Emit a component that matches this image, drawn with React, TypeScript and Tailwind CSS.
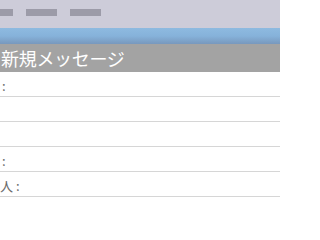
const rows = [':', '', '', ':', '人 :'];

export default function App() {
  return (
    <div
      className="w-[280px] h-[210px] overflow-hidden bg-white"
      style={{ fontFamily: '"Noto Sans CJK JP", "Noto Sans", sans-serif' }}
    >
      {/* toolbar strip */}
      <div className="h-[28px] bg-[#cdccd9] flex gap-[13px] pt-[9px]">
        <div className="w-[13px] h-[7px] bg-[#9c9ba8]" />
        <div className="w-[31px] h-[7px] bg-[#9c9ba8]" />
        <div className="w-[31px] h-[7px] bg-[#9c9ba8]" />
      </div>
      <div className="h-[16px] bg-linear-to-b from-[#8ebae0] via-[#86b2da] to-[#7898bd]" />

      {/* title */}
      <div className="h-[28px] bg-[#a3a3a3] flex items-center">
        <span className="pl-[1px] text-[18px] leading-none text-white tracking-[-0.3px]">新規メッセージ</span>
      </div>

      {/* fields */}
      <div className="flex flex-col">
        {rows.map((label, i) => (
          <div key={i} className="h-[25px] border-b border-[#d6d6d6] flex items-center">
            <span className={`${label === ':' ? 'pl-[2px]' : ''} pt-[3px] text-[13px] leading-none text-[#6b6b6b] whitespace-nowrap`}>
              {label}
            </span>
          </div>
        ))}
      </div>
    </div>
  );
}
